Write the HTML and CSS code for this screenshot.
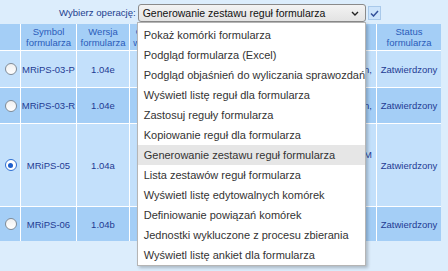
FILE: index.html
```html
<!DOCTYPE html>
<html lang="pl">
<head>
    <meta charset="UTF-8">
    <meta name="viewport" content="width=device-width, initial-scale=1.0">
    <title>Formularze</title>
    <link rel="stylesheet" href="styles.css">
</head>
<body>
    <div class="pasek">
        <span class="etykieta">Wybierz operację:</span>
        <div class="combo">
            <div class="wybor">
                <span>Generowanie zestawu reguł formularza</span>
                <svg class="strzalka" width="8" height="5" viewBox="0 0 8 5"><path d="M1 1 L4 4 L7 1" fill="none" stroke="#222" stroke-width="1.4"/></svg>
            </div>
            <ul class="lista">
                <li>Pokaż komórki formularza</li>
                <li>Podgląd formularza (Excel)</li>
                <li>Podgląd objaśnień do wyliczania sprawozdań</li>
                <li>Wyświetl listę reguł dla formularza</li>
                <li>Zastosuj reguły formularza</li>
                <li>Kopiowanie reguł dla formularza</li>
                <li class="zaznaczony">Generowanie zestawu reguł formularza</li>
                <li>Lista zestawów reguł formularza</li>
                <li>Wyświetl listę edytowalnych komórek</li>
                <li>Definiowanie powiązań komórek</li>
                <li>Jednostki wykluczone z procesu zbierania</li>
                <li>Wyświetl listę ankiet dla formularza</li>
            </ul>
        </div>
        <button class="ok"><svg width="9" height="7" viewBox="0 0 9 7"><path d="M1 3.5 L3.5 6 L8 1" fill="none" stroke="#34509a" stroke-width="1.5"/></svg></button>
    </div>

    <div class="tabela">
        <div class="naglowek"></div>
        <div class="naglowek">Symbol<br>formularza</div>
        <div class="naglowek">Wersja<br>formularza</div>
        <div class="naglowek">Opis<br>wersji</div>
        <div class="naglowek">Podstawa prawna</div>
        <div class="naglowek">Status<br>formularza</div>

        <div class="jasny"><span class="radio"></span></div>
        <div class="jasny">MRiPS-03-P</div>
        <div class="jasny">1.04e</div>
        <div class="jasny"></div>
        <div class="jasny prawy">Dz. U. 2019, Lublin,</div>
        <div class="jasny">Zatwierdzony</div>

        <div class="ciemny"><span class="radio"></span></div>
        <div class="ciemny">MRiPS-03-R</div>
        <div class="ciemny">1.04e</div>
        <div class="ciemny"></div>
        <div class="ciemny prawy">Dz. U. 2019, Lublin,</div>
        <div class="ciemny">Zatwierdzony</div>

        <div class="jasny"><span class="radio wybrany"></span></div>
        <div class="jasny">MRiPS-05</div>
        <div class="jasny">1.04a</div>
        <div class="jasny"></div>
        <div class="jasny prawy">Sprawozdanie M<br>Departament&nbsp;&nbsp;&nbsp;&nbsp;&nbsp;&nbsp;<br>Rodziny&nbsp;&nbsp;&nbsp;&nbsp;&nbsp;&nbsp;</div>
        <div class="jasny">Zatwierdzony</div>

        <div class="ciemny"><span class="radio"></span></div>
        <div class="ciemny">MRiPS-06</div>
        <div class="ciemny">1.04b</div>
        <div class="ciemny"></div>
        <div class="ciemny"></div>
        <div class="ciemny">Zatwierdzony</div>
    </div>
</body>
</html>
```

FILE: styles.css
```css
html, body {
    min-height: 271px;
}
body {
    margin: 0;
    background-color: #dcedfc;
    font-family: "Liberation Sans", Arial, sans-serif;
    color: #1f3b93;
}
.pasek {
    height: 24px;
    box-sizing: border-box;
    padding: 4px 0 0 59px;
    display: flex;
    align-items: flex-start;
}
.etykieta {
    font-size: 9.6px;
    line-height: 18px;
    margin-right: 2px;
    color: #23408f;
}
.combo {
    position: relative;
}
.wybor {
    width: 228px;
    height: 18px;
    box-sizing: border-box;
    border: 1px solid #8a8a8a;
    border-radius: 3px;
    background: linear-gradient(#f3f3f3, #e3e3e3);
    display: flex;
    align-items: center;
    justify-content: space-between;
    padding: 0 6px 0 4px;
    font-size: 10.5px;
    color: #111;
}
.lista {
    position: absolute;
    left: -1px;
    top: 18px;
    width: 229px;
    box-sizing: border-box;
    margin: 0;
    padding: 2px 0 0;
    list-style: none;
    background: white;
    border: 1px solid #b5b5b5;
    box-shadow: 2px 2px 3px rgba(0, 0, 0, 0.22);
    z-index: 2;
}
.lista li {
    height: 20px;
    line-height: 20px;
    padding-left: 6px;
    font-size: 11px;
    color: #333;
    white-space: nowrap;
}
.lista li.zaznaczony {
    background-color: #e6e6e6;
}
.ok {
    margin: 2px 0 0 2px;
    width: 13px;
    height: 14px;
    padding: 0;
    border: 1px solid #a9c9ea;
    background-color: #cde4fb;
    display: flex;
    align-items: center;
    justify-content: center;
}
.tabela {
    display: grid;
    grid-template-columns: 20px 55px 52px 31px 214px 64px;
    grid-template-rows: 26px 36px 35px 82px 34px;
    gap: 1px;
    background-color: white;
    width: max-content;
}
.tabela div {
    display: flex;
    align-items: center;
    justify-content: center;
    text-align: center;
    font-size: 9.5px;
    line-height: 11px;
    overflow: hidden;
    white-space: nowrap;
}
.naglowek {
    background-color: #a4cef6;
    color: #2a5cba;
}
.jasny {
    background-color: #c3e0fb;
}
.ciemny {
    background-color: #a4cef6;
}
.tabela div.prawy {
    justify-content: flex-end;
    text-align: right;
    padding-right: 4px;
}
.radio {
    width: 10px;
    height: 10px;
    margin-left: 1px;
    border: 1px solid #808b96;
    border-radius: 50%;
    background: linear-gradient(#f0f0f0, #ffffff);
    position: relative;
}
.radio.wybrany {
    border-color: #2f6fd1;
    background: white;
}
.radio.wybrany::after {
    content: "";
    position: absolute;
    left: 2.5px;
    top: 2.5px;
    width: 5px;
    height: 5px;
    border-radius: 50%;
    background-color: #1f5fcc;
}
```
